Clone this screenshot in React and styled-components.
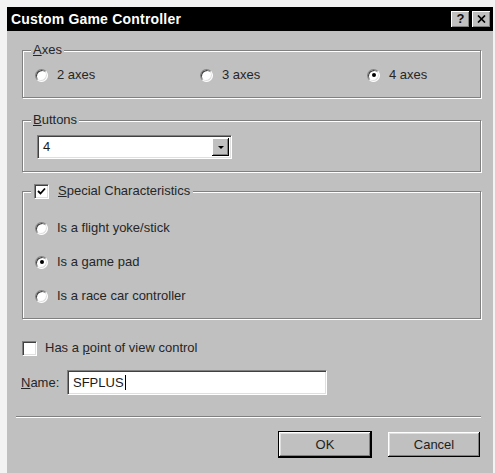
import React from 'react';
import styled, { createGlobalStyle } from 'styled-components';

const GlobalStyle = createGlobalStyle`
  html, body {
    margin: 0;
    padding: 0;
    height: 100%;
  }
  body {
    background: #f3f3f3;
    font-family: "Liberation Sans", Arial, sans-serif;
  }
  #root {
    height: 100%;
  }
`;

const Page = styled.div`
  box-sizing: border-box;
  height: 100%;
  padding: 7px 2px 0 7px;
  display: flex;
`;

const Dialog = styled.div`
  flex: 1;
  display: flex;
  flex-direction: column;
  background: #c0c0c0;
  color: #262626;
  font-size: 13px;
  line-height: 16px;
`;

const TitleBar = styled.div`
  height: 24px;
  background: #000;
  display: flex;
  align-items: center;
  gap: 2px;
  padding: 0 2px 0 4px;
`;

const Title = styled.div`
  flex: 1;
  color: #fff;
  font-weight: bold;
  font-size: 14px;
  letter-spacing: 0.2px;
`;

const CaptionButton = styled.div`
  box-sizing: border-box;
  width: 19px;
  height: 17px;
  background: #c0c0c0;
  box-shadow: inset -1px -1px #000, inset 1px 1px #fff, inset -2px -2px #808080;
  display: flex;
  align-items: center;
  justify-content: center;
  font-weight: bold;
  font-size: 13px;
  color: #111;
`;

const Body = styled.div`
  flex: 1;
  display: flex;
  flex-direction: column;
  padding: 11px 12px 0 15px;
`;

const Group = styled.fieldset`
  box-sizing: border-box;
  min-width: 0;
  margin: ${p => p.$mt}px 0 0 0;
  padding: ${p => p.$pt}px 12px ${p => p.$pb}px 12px;
  border: 1px solid #808080;
  box-shadow: inset 1px 1px #fff, 1px 1px #fff;
`;

const Legend = styled.legend`
  display: flex;
  align-items: center;
  gap: 9px;
  margin-left: -4px;
  padding: 0 ${p => p.$px || 2}px;
  line-height: 16px;
  background: #c0c0c0;
`;

const AxesRow = styled.div`
  display: grid;
  grid-template-columns: 165px 167px auto;
`;

const Option = styled.label`
  display: flex;
  align-items: center;
  gap: 9px;
  height: 18px;
`;

const OptionList = styled.div`
  display: flex;
  flex-direction: column;
  gap: 16px;
`;

const RadioMark = styled.span`
  box-sizing: border-box;
  width: 13px;
  height: 13px;
  border-radius: 50%;
  background: #fff;
  border: 1px solid;
  border-color: #808080 #fff #fff #808080;
  box-shadow: inset 1px 1px #404040, inset -1px -1px #dfdfdf;
  display: flex;
  align-items: center;
  justify-content: center;
  flex: none;

  &::after {
    content: '';
    width: 4px;
    height: 4px;
    border-radius: 50%;
    background: ${p => (p.$checked ? '#000' : 'transparent')};
  }
`;

const CheckMark = styled.span`
  box-sizing: border-box;
  width: 15px;
  height: 15px;
  background: #fff;
  border: 1px solid;
  border-color: #808080 #fff #fff #808080;
  box-shadow: inset 1px 1px #404040, inset -1px -1px #dfdfdf;
  display: flex;
  align-items: center;
  justify-content: center;
  flex: none;
`;

const Sunken = styled.div`
  box-sizing: border-box;
  width: ${p => p.$w}px;
  height: ${p => p.$h}px;
  background: #fff;
  border: 1px solid;
  border-color: #808080 #fff #fff #808080;
  box-shadow: inset 1px 1px #404040, inset -1px -1px #dfdfdf;
  display: flex;
  align-items: center;
  padding: 2px;
  color: #1a1a1a;
`;

const Combo = styled(Sunken)`
  margin-left: 2px;
`;

const FieldText = styled.span`
  flex: 1;
  display: flex;
  align-items: center;
  padding-left: 3px;
`;

const Caret = styled.span`
  width: 1px;
  height: 15px;
  background: #000;
  margin-left: 1px;
`;

const DropButton = styled.span`
  box-sizing: border-box;
  width: 17px;
  height: 100%;
  background: #c0c0c0;
  box-shadow: inset -1px -1px #000, inset 1px 1px #fff, inset -2px -2px #808080;
  display: flex;
  align-items: center;
  justify-content: center;

  &::after {
    content: '';
    border-left: 3px solid transparent;
    border-right: 3px solid transparent;
    border-top: 3px solid #000;
  }
`;

const PovRow = styled(Option)`
  margin-top: 20px;
  gap: 8px;
`;

const NameRow = styled.div`
  display: flex;
  align-items: center;
  margin-top: 13px;
`;

const NameLabel = styled.label`
  width: 46px;
  margin-left: -1px;
`;

const Separator = styled.div`
  margin: 21px 0 0 -6px;
  border-top: 1px solid #808080;
  border-bottom: 1px solid #fff;
`;

const ButtonRow = styled.div`
  display: flex;
  justify-content: flex-end;
  gap: 15px;
  margin-top: 13px;
`;

const PushButton = styled.div`
  box-sizing: border-box;
  width: 94px;
  height: 27px;
  background: #c0c0c0;
  border: 1px solid ${p => (p.$default ? '#000' : 'transparent')};
  box-shadow: inset -1px -1px #000, inset 1px 1px #fff, inset -2px -2px #808080, inset 2px 2px #dfdfdf;
  display: flex;
  align-items: center;
  justify-content: center;
  color: #1e1e1e;
`;

function Radio({ checked, children }) {
  return (
    <Option>
      <RadioMark $checked={checked} />
      <span>{children}</span>
    </Option>
  );
}

function Check({ checked }) {
  return (
    <CheckMark>
      {checked && (
        <svg width="9" height="9" viewBox="0 0 9 9">
          <path d="M1 4 L3.5 6.5 L8 1.5" stroke="#000" strokeWidth="1.8" fill="none" />
        </svg>
      )}
    </CheckMark>
  );
}

export default function App() {
  return (
    <>
      <GlobalStyle />
      <Page>
        <Dialog>
          <TitleBar>
            <Title>Custom Game Controller</Title>
            <CaptionButton>?</CaptionButton>
            <CaptionButton>
              <svg width="9" height="8" viewBox="0 0 9 8">
                <path d="M1 0.5 L8 7.5 M8 0.5 L1 7.5" stroke="#000" strokeWidth="1.7" />
              </svg>
            </CaptionButton>
          </TitleBar>
          <Body>
            <Group $mt={0} $pt={8} $pb={13}>
              <Legend><span><u>A</u>xes</span></Legend>
              <AxesRow>
                <Radio>2 axes</Radio>
                <Radio>3 axes</Radio>
                <Radio checked>4 axes</Radio>
              </AxesRow>
            </Group>

            <Group $mt={14} $pt={7} $pb={12}>
              <Legend><span><u>B</u>uttons</span></Legend>
              <Combo $w={195} $h={24}>
                <FieldText>4</FieldText>
                <DropButton />
              </Combo>
            </Group>

            <Group $mt={11} $pt={20} $pb={13}>
              <Legend $px={3}>
                <Check checked />
                <span><u>S</u>pecial Characteristics</span>
              </Legend>
              <OptionList>
                <Radio>Is a flight yoke/stick</Radio>
                <Radio checked>Is a game pad</Radio>
                <Radio>Is a race car controller</Radio>
              </OptionList>
            </Group>

            <PovRow>
              <Check />
              <span>Has a <u>p</u>oint of view control</span>
            </PovRow>

            <NameRow>
              <NameLabel><u>N</u>ame:</NameLabel>
              <Sunken $w={260} $h={25}>
                <FieldText>SFPLUS<Caret /></FieldText>
              </Sunken>
            </NameRow>

            <Separator />

            <ButtonRow>
              <PushButton $default>OK</PushButton>
              <PushButton>Cancel</PushButton>
            </ButtonRow>
          </Body>
        </Dialog>
      </Page>
    </>
  );
}
